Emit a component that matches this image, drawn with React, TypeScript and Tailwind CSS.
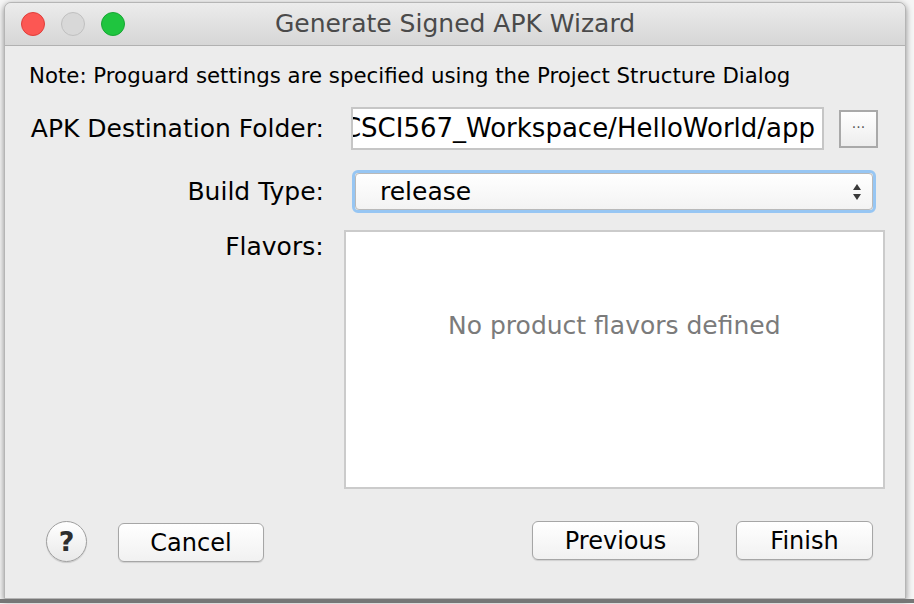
import React from 'react';

const font = "font-['DejaVu_Sans','Liberation_Sans',sans-serif]";

function TrafficLights() {
  return (
    <div className="flex items-center gap-[16px] pl-[16px]">
      <span className="w-[24px] h-[24px] rounded-full bg-[#fc5753] border border-[#df3e3a]" />
      <span className="w-[24px] h-[24px] rounded-full bg-[#d8d8d8] border border-[#c0c0c0]" />
      <span className="w-[24px] h-[24px] rounded-full bg-[#1fc53f] border border-[#18a634]" />
    </div>
  );
}

function PushButton({ label, className }: { label: string; className: string }) {
  return (
    <button
      className={`h-[39px] rounded-[6px] border border-[#a6a6a6] bg-gradient-to-b from-white to-[#f1f1f1] shadow-[0_1px_1px_rgba(0,0,0,0.12)] text-[24px] text-black leading-none ${className}`}
    >
      {label}
    </button>
  );
}

export default function App() {
  return (
    <div className={`w-[914px] h-[604px] overflow-hidden bg-[#f5f5f5] ${font}`}>
      <div className="ml-[4px] mt-[2px] w-[902px] h-[597px] flex flex-col bg-[#ececec] rounded-t-[7px] border border-[#b5b5b5] shadow-[0_2px_6px_rgba(0,0,0,0.45)]">
        {/* title bar */}
        <div className="relative h-[43px] shrink-0 flex items-center rounded-t-[7px] bg-gradient-to-b from-[#ececec] to-[#d6d6d6] border-b border-[#b1b1b1]">
          <TrafficLights />
          <div className="absolute inset-0 flex items-center justify-center text-[25px] text-[#4a4a4a]">
            Generate Signed APK Wizard
          </div>
        </div>

        {/* body */}
        <div className="flex flex-col flex-1 pl-[24px] pr-[20px]">
          <p className="mt-[17px] text-[21.3px] leading-[26px] text-black whitespace-nowrap">
            Note: Proguard settings are specified using the Project Structure Dialog
          </p>

          <div className="mt-[18px] flex items-center h-[43px]">
            <span className="w-[295px] text-right text-[25px] text-black">APK Destination Folder:</span>
            <div className="ml-[27px] w-[473px] h-[43px] bg-white border-2 border-[#c6c6c6] flex items-center justify-end overflow-hidden pr-[7px]">
              <span className="whitespace-nowrap text-[26px] text-black">CSCI567_Workspace/HelloWorld/app</span>
            </div>
            <button className="ml-[15px] w-[39px] h-[38px] border-2 border-[#a9a9a9] bg-gradient-to-b from-white to-[#ededed] text-[14px] text-[#555] leading-none pb-[4px]">
              ···
            </button>
          </div>

          <div className="mt-[20px] flex items-center h-[43px]">
            <span className="w-[295px] text-right text-[25px] text-black">Build Type:</span>
            <div className="ml-[28px] w-[524px] h-[43px] rounded-[6px] border-[3px] border-[#97c6f3] flex">
              <div className="flex-1 flex items-center justify-between rounded-[4px] bg-gradient-to-b from-white to-[#f3f3f3] border border-[#b9b9b9] pl-[24px] pr-[10px]">
                <span className="text-[25px] text-black leading-none">release</span>
                <svg width="10" height="18" viewBox="0 0 10 18">
                  <path d="M5 1 L9 7 L1 7 Z" fill="#3a3a3a" />
                  <path d="M5 17 L9 11 L1 11 Z" fill="#3a3a3a" />
                </svg>
              </div>
            </div>
          </div>

          <div className="mt-[17px] flex items-start">
            <span className="w-[295px] pt-[2px] text-right text-[25px] text-black leading-[30px]">Flavors:</span>
            <div className="ml-[20px] w-[542px] h-[259px] bg-white border-2 border-[#cbcbcb] flex items-center justify-center pb-[68px]">
              <span className="text-[25px] text-[#7b7b7b]">No product flavors defined</span>
            </div>
          </div>

          <div className="mt-[32px] flex items-center">
            <button className="ml-[17px] w-[41px] h-[41px] rounded-full border border-[#9e9e9e] bg-gradient-to-b from-white to-[#e9e9e9] shadow-[0_1px_1px_rgba(0,0,0,0.15)] text-[27px] font-bold text-[#2e2e2e] leading-none">
              ?
            </button>
            <PushButton label="Cancel" className="ml-[31px] w-[146px] mt-[2px]" />
            <PushButton label="Previous" className="ml-[268px] w-[167px] -mt-[2px]" />
            <PushButton label="Finish" className="ml-[37px] w-[137px] -mt-[2px]" />
          </div>
        </div>
      </div>
      <div className="h-[4px] bg-[#767676]" />
    </div>
  );
}
